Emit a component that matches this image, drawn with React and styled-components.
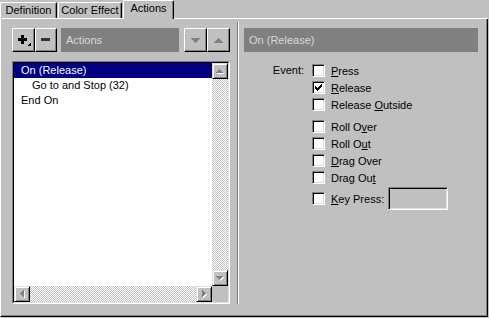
import React, { useId } from 'react';
import styled, { createGlobalStyle } from 'styled-components';

const Global = createGlobalStyle`
  html, body { margin: 0; padding: 0; background: #c0c0c0; }
  body {
    font-family: "Liberation Sans", Arial, sans-serif;
    font-size: 11px;
    color: #000;
    width: 489px;
    height: 318px;
    overflow: hidden;
  }
`;

const Window = styled.div`
  width: 488px;
`;

const TabStrip = styled.div`
  display: flex;
  align-items: flex-end;
  height: 18px;
  border-bottom: 1px solid #fff;
`;

const Tab = styled.div`
  box-sizing: border-box;
  width: ${(p) => p.$w}px;
  height: ${(p) => (p.$active ? 19 : 16)}px;
  margin-bottom: ${(p) => (p.$active ? -1 : 0)}px;
  margin-left: ${(p) => p.$ml || 0}px;
  border-top: 1px solid #fff;
  border-left: 1px solid #fff;
  border-right: 1px solid #000;
  border-radius: 2px 2px 0 0;
  box-shadow: inset -1px 0 0 #808080;
  background: #c0c0c0;
  text-align: center;
  line-height: 15px;
  white-space: nowrap;
`;

const Panel = styled.div`
  box-sizing: border-box;
  height: 298px;
  display: flex;
  align-items: flex-start;
  border-left: 1px solid #fff;
  border-right: 1px solid #000;
  border-bottom: 1px solid #000;
  box-shadow: inset -1px -1px 0 #808080;
`;

const LeftPane = styled.div`
  margin-left: 11px;
  padding-top: 9px;
  width: 218px;
  display: flex;
  flex-direction: column;
`;

const Toolbar = styled.div`
  display: flex;
  height: 24px;
`;

const ToolButton = styled.div`
  box-sizing: border-box;
  flex: none;
  width: ${(p) => p.$w}px;
  height: 24px;
  margin-left: ${(p) => p.$ml || 0}px;
  background: #c0c0c0;
  border: 1px solid;
  border-color: #fff #000 #000 #fff;
  box-shadow: inset -1px -1px 0 #808080;
  display: flex;
  align-items: center;
  justify-content: center;
`;

const HeaderBar = styled.div`
  box-sizing: border-box;
  flex: 1;
  height: 24px;
  margin-left: ${(p) => p.$ml || 0}px;
  background: #808080;
  color: #d8d8d8;
  line-height: 24px;
  padding-left: 5px;
  white-space: nowrap;
`;

const ListOuter = styled.div`
  box-sizing: border-box;
  margin-top: 9px;
  height: 243px;
  border: 1px solid;
  border-color: #808080 #fff #fff #808080;
`;

const ListInner = styled.div`
  box-sizing: border-box;
  height: 100%;
  border: 1px solid;
  border-color: #000 #dfdfdf #dfdfdf #000;
  display: grid;
  grid-template-columns: 1fr 16px;
  grid-template-rows: 1fr 16px;
`;

const ListContent = styled.div`
  background: #fff;
  overflow: hidden;
`;

const ListRow = styled.div`
  height: 15px;
  line-height: 15px;
  padding-left: ${(p) => p.$indent}px;
  background: ${(p) => (p.$sel ? '#000080' : 'transparent')};
  color: ${(p) => (p.$sel ? '#fff' : '#000')};
  white-space: nowrap;
`;

const VScroll = styled.div`
  display: flex;
  flex-direction: column;
`;

const HScroll = styled.div`
  display: flex;
`;

const ScrollBtn = styled.div`
  box-sizing: border-box;
  flex: none;
  width: 16px;
  height: 16px;
  background: #c0c0c0;
  border: 1px solid;
  border-color: #dfdfdf #000 #000 #dfdfdf;
  box-shadow: inset 1px 1px 0 #fff, inset -1px -1px 0 #808080;
  display: flex;
  align-items: center;
  justify-content: center;
`;

const TrackBox = styled.div`
  flex: 1;
  min-width: 0;
  min-height: 0;
  position: relative;
  overflow: hidden;
  background: #c0c0c0;
  & > svg {
    display: block;
    width: 100%;
    height: 100%;
  }
`;

const Corner = styled.div`
  background: #c0c0c0;
`;

const Divider = styled.div`
  flex: none;
  margin-left: 7px;
  margin-top: 3px;
  width: 0;
  height: 282px;
  border-left: 1px solid #808080;
  border-right: 1px solid #fff;
`;

const RightPane = styled.div`
  margin-left: 5px;
  padding-top: 9px;
  width: 234px;
`;

const Form = styled.div`
  display: grid;
  grid-template-columns: 68px auto;
  padding-top: 10px;
`;

const EventLabel = styled.div`
  text-align: right;
  padding-right: 8px;
  line-height: 17px;
`;

const OptionGroup = styled.div`
  display: flex;
  flex-direction: column;
  margin-top: ${(p) => p.$mt || 0}px;
`;

const CheckRow = styled.div`
  display: flex;
  align-items: center;
  gap: 6px;
  height: ${(p) => p.$h || 17}px;
  margin-top: ${(p) => p.$mt || 0}px;
  white-space: nowrap;
`;

const Box = styled.div`
  box-sizing: border-box;
  flex: none;
  width: 13px;
  height: 13px;
  padding: 2px;
  background: #fff;
  border: 1px solid;
  border-color: #808080 #fff #fff #808080;
  box-shadow: inset 1px 1px 0 #000, inset -1px -1px 0 #dfdfdf;
  display: flex;
`;

const KeyLabel = styled.span`
  width: 51px;
`;

const KeyInput = styled.div`
  box-sizing: border-box;
  width: 60px;
  height: 23px;
  background: #c0c0c0;
  border: 1px solid;
  border-color: #808080 #fff #fff #808080;
  box-shadow: inset 1px 1px 0 #000, inset -1px -1px 0 #dfdfdf;
`;

function Track() {
  const id = 'chk' + useId().replace(/:/g, '');
  return (
    <TrackBox>
      <svg shapeRendering="crispEdges">
        <defs>
          <pattern id={id} width="2" height="2" patternUnits="userSpaceOnUse">
            <rect x="0" y="0" width="2" height="2" fill="#c0c0c0" />
            <rect x="0" y="0" width="1" height="1" fill="#fff" />
            <rect x="1" y="1" width="1" height="1" fill="#fff" />
          </pattern>
        </defs>
        <rect x="0" y="0" width="100%" height="100%" fill={`url(#${id})`} />
      </svg>
    </TrackBox>
  );
}

function Tri({ dir, n, color = '#808080', shadow = false }) {
  const rects = [];
  const vertical = dir === 'up' || dir === 'down';
  const w = vertical ? 2 * n - 1 : n;
  const h = vertical ? n : 2 * n - 1;
  for (let i = 0; i < n; i++) {
    const len = 2 * i + 1;
    const off = n - 1 - i;
    if (dir === 'up') rects.push([off, i, len, 1]);
    if (dir === 'down') rects.push([off, n - 1 - i, len, 1]);
    if (dir === 'left') rects.push([i, off, 1, len]);
    if (dir === 'right') rects.push([n - 1 - i, off, 1, len]);
  }
  const s = shadow ? 1 : 0;
  return (
    <svg width={w + s} height={h + s} shapeRendering="crispEdges" style={{ display: 'block' }}>
      {shadow &&
        rects.map((r, i) => (
          <rect key={'s' + i} x={r[0] + 1} y={r[1] + 1} width={r[2]} height={r[3]} fill="#fff" />
        ))}
      {rects.map((r, i) => (
        <rect key={i} x={r[0]} y={r[1]} width={r[2]} height={r[3]} fill={color} />
      ))}
    </svg>
  );
}

function PlusIcon() {
  return (
    <svg width="21" height="22" shapeRendering="crispEdges" style={{ display: 'block' }}>
      <rect x="5" y="9" width="9" height="3" fill="#000" />
      <rect x="8" y="6" width="3" height="9" fill="#000" />
      <polygon points="18,13 18,17 14,17" fill="#000" />
    </svg>
  );
}

function MinusIcon() {
  return (
    <svg width="20" height="22" shapeRendering="crispEdges" style={{ display: 'block' }}>
      <rect x="5" y="9" width="9" height="3" fill="#333" />
    </svg>
  );
}

function CheckMark() {
  const rows = [
    '......X',
    '.....XX',
    'X...XXX',
    'XX.XXX.',
    'XXXXX..',
    '.XXX...',
    '..X....',
  ];
  const rects = [];
  rows.forEach((r, y) =>
    r.split('').forEach((c, x) => {
      if (c === 'X') rects.push(<rect key={x + '-' + y} x={x} y={y} width="1" height="1" fill="#000" />);
    })
  );
  return (
    <svg width="7" height="7" shapeRendering="crispEdges" style={{ display: 'block' }}>
      {rects}
    </svg>
  );
}

function Check({ checked, children, mt, h }) {
  return (
    <CheckRow $mt={mt} $h={h}>
      <Box>{checked && <CheckMark />}</Box>
      {children}
    </CheckRow>
  );
}

export default function App() {
  return (
    <>
      <Global />
      <Window>
        <TabStrip>
          <Tab $w={57}>Definition</Tab>
          <Tab $w={64} $ml={1}>Color Effect</Tab>
          <Tab $w={51} $ml={1} $active>Actions</Tab>
        </TabStrip>
        <Panel>
          <LeftPane>
            <Toolbar>
              <ToolButton $w={23}><PlusIcon /></ToolButton>
              <ToolButton $w={22}><MinusIcon /></ToolButton>
              <HeaderBar $ml={4}>Actions</HeaderBar>
              <ToolButton $w={23} $ml={5}><Tri dir="down" n={5} /></ToolButton>
              <ToolButton $w={23}><Tri dir="up" n={5} /></ToolButton>
            </Toolbar>
            <ListOuter>
              <ListInner>
                <ListContent>
                  <ListRow $indent={7} $sel>On (Release)</ListRow>
                  <ListRow $indent={18}>Go to and Stop (32)</ListRow>
                  <ListRow $indent={7}>End On</ListRow>
                </ListContent>
                <VScroll>
                  <ScrollBtn><Tri dir="up" n={4} shadow /></ScrollBtn>
                  <Track />
                  <ScrollBtn><Tri dir="down" n={4} shadow /></ScrollBtn>
                </VScroll>
                <HScroll>
                  <ScrollBtn><Tri dir="left" n={4} shadow /></ScrollBtn>
                  <Track />
                  <ScrollBtn><Tri dir="right" n={4} shadow /></ScrollBtn>
                </HScroll>
                <Corner />
              </ListInner>
            </ListOuter>
          </LeftPane>
          <Divider />
          <RightPane>
            <Toolbar>
              <HeaderBar>On (Release)</HeaderBar>
            </Toolbar>
            <Form>
              <EventLabel>Event:</EventLabel>
              <div>
                <OptionGroup>
                  <Check><span><u>P</u>ress</span></Check>
                  <Check checked><span><u>R</u>elease</span></Check>
                  <Check><span>Release <u>O</u>utside</span></Check>
                </OptionGroup>
                <OptionGroup $mt={5}>
                  <Check><span>Roll O<u>v</u>er</span></Check>
                  <Check><span>Roll O<u>u</u>t</span></Check>
                  <Check><span><u>D</u>rag Over</span></Check>
                  <Check><span>Drag Ou<u>t</u></span></Check>
                </OptionGroup>
                <Check mt={1} h={23}>
                  <KeyLabel><u>K</u>ey Press:</KeyLabel>
                  <KeyInput />
                </Check>
              </div>
            </Form>
          </RightPane>
        </Panel>
      </Window>
    </>
  );
}
